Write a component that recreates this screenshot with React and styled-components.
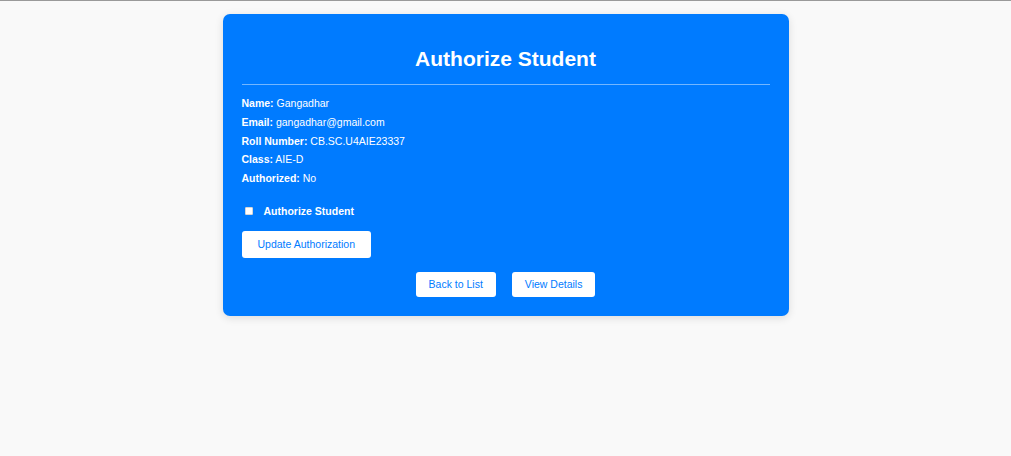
import React, { useState } from 'react';
import styled, { createGlobalStyle } from 'styled-components';

const GlobalStyle = createGlobalStyle`
  html, body {
    margin: 0;
    padding: 0;
    background: #f9f9f9;
    font-family: "Liberation Sans", Arial, sans-serif;
  }
`;

const Page = styled.div`
  min-height: 456px;
  box-sizing: border-box;
  border-top: 1px solid #9a9a9a;
  padding-top: 13px;
`;

const Card = styled.div`
  width: 566px;
  box-sizing: border-box;
  margin: 0 auto;
  padding: 19px;
  background: #007bff;
  border-radius: 7px;
  box-shadow: 0 2px 8px rgba(0, 0, 0, 0.12);
  color: #fff;
`;

const Title = styled.h2`
  margin: 14px 0 13px;
  font-size: 21px;
  line-height: 24px;
  font-weight: 700;
  text-align: center;
`;

const Divider = styled.hr`
  margin: 0 0 9px;
  border: none;
  height: 1px;
  background: rgba(255, 255, 255, 0.45);
`;

const InfoLine = styled.p`
  margin: 0;
  font-size: 10.5px;
  line-height: 18.75px;

  strong {
    font-weight: 700;
  }
`;

const CheckRow = styled.label`
  display: flex;
  align-items: center;
  gap: 11px;
  height: 16px;
  margin: 15px 0 12px;
  font-size: 10.5px;
  font-weight: 700;
  cursor: pointer;
`;

const Check = styled.input`
  appearance: none;
  width: 8px;
  height: 8px;
  margin: 0 0 0 3px;
  background: #fff;
  border: 1px solid #d6d6d6;
  border-radius: 1px;
  box-sizing: border-box;

  &:checked {
    background: #1a1a1a;
  }
`;

const Button = styled.button`
  display: inline-block;
  padding: ${p => (p.$big ? '7px 16px' : '6px 13px')};
  font-family: "Liberation Sans", Arial, sans-serif;
  font-size: 10.5px;
  line-height: 13px;
  color: #007bff;
  background: #fff;
  border: none;
  border-radius: 3px;
  cursor: pointer;
`;

const Actions = styled.div`
  display: flex;
  justify-content: center;
  gap: 16px;
  margin-top: 14px;
`;

const student = {
  name: 'Gangadhar',
  email: 'gangadhar@gmail.com',
  roll: 'CB.SC.U4AIE23337',
  className: 'AIE-D',
};

function App() {
  const [authorized, setAuthorized] = useState(false);

  return (
    <Page>
      <GlobalStyle />
      <Card>
        <Title>Authorize Student</Title>
        <Divider />
        <InfoLine><strong>Name:</strong> {student.name}</InfoLine>
        <InfoLine><strong>Email:</strong> {student.email}</InfoLine>
        <InfoLine><strong>Roll Number:</strong> {student.roll}</InfoLine>
        <InfoLine><strong>Class:</strong> {student.className}</InfoLine>
        <InfoLine><strong>Authorized:</strong> No</InfoLine>

        <CheckRow>
          <Check
            type="checkbox"
            checked={authorized}
            onChange={e => setAuthorized(e.target.checked)}
          />
          Authorize Student
        </CheckRow>

        <Button $big>Update Authorization</Button>

        <Actions>
          <Button>Back to List</Button>
          <Button>View Details</Button>
        </Actions>
      </Card>
    </Page>
  );
}

export default App;
